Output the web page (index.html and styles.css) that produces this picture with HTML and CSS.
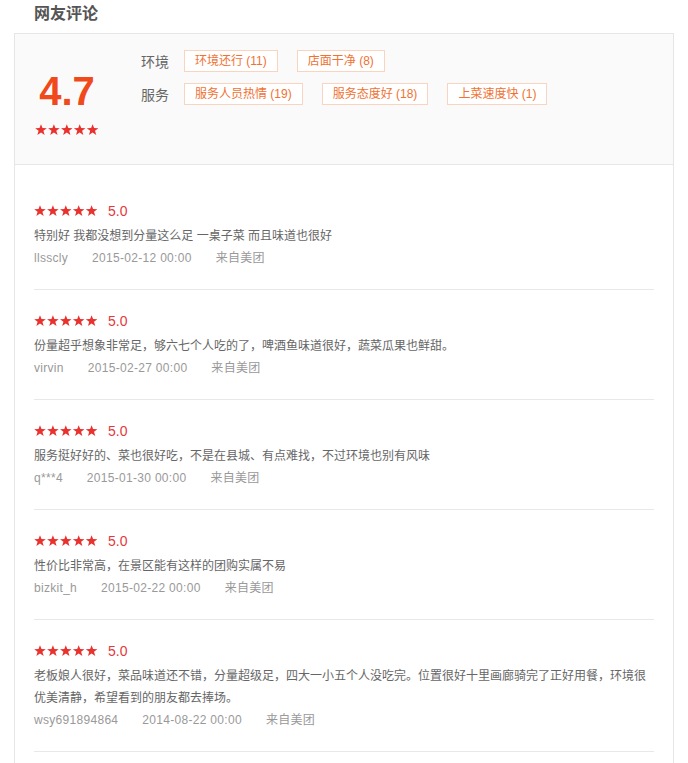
FILE: index.html
```html
<!DOCTYPE html>
<html lang="zh">
<head>
<meta charset="utf-8">
<title>网友评论</title>
<link rel="stylesheet" href="styles.css">
</head>
<body>
<svg class="defs" width="0" height="0" aria-hidden="true">
  <defs>
    <symbol id="star" viewBox="0 0 12 12">
      <polygon points="6,0.2 7.5,4.05 11.8,4.15 8.4,6.8 9.65,11.1 6,8.55 2.35,11.1 3.6,6.8 0.2,4.15 4.5,4.05"/>
    </symbol>
    <symbol id="stars5" viewBox="0 0 64 12">
      <use href="#star" x="0" y="0" width="12" height="12"/>
      <use href="#star" x="12.9" y="0" width="12" height="12"/>
      <use href="#star" x="25.8" y="0" width="12" height="12"/>
      <use href="#star" x="38.7" y="0" width="12" height="12"/>
      <use href="#star" x="51.6" y="0" width="12" height="12"/>
    </symbol>
  </defs>
</svg>

<div class="page">
  <h2 class="title">网友评论</h2>
  <div class="box">
    <div class="summary">
      <div class="score">
        <div class="score-num">4.7</div>
        <svg class="stars" width="64" height="12"><use href="#stars5"/></svg>
      </div>
      <div class="tags">
        <div class="tag-row">
          <span class="tag-label">环境</span>
          <span class="tag">环境还行 (11)</span>
          <span class="tag">店面干净 (8)</span>
        </div>
        <div class="tag-row">
          <span class="tag-label">服务</span>
          <span class="tag">服务人员热情 (19)</span>
          <span class="tag">服务态度好 (18)</span>
          <span class="tag">上菜速度快 (1)</span>
        </div>
      </div>
    </div>

    <ul class="reviews">
      <li class="review">
        <div class="rating"><svg class="stars" width="64" height="12"><use href="#stars5"/></svg><span class="rate">5.0</span></div>
        <p class="comment">特别好 我都没想到分量这么足 一桌子菜 而且味道也很好</p>
        <div class="meta"><span class="user">llsscly</span><span class="date">2015-02-12 00:00</span><span class="src">来自美团</span></div>
      </li>
      <li class="review">
        <div class="rating"><svg class="stars" width="64" height="12"><use href="#stars5"/></svg><span class="rate">5.0</span></div>
        <p class="comment">份量超乎想象非常足，够六七个人吃的了，啤酒鱼味道很好，蔬菜瓜果也鲜甜。</p>
        <div class="meta"><span class="user">virvin</span><span class="date">2015-02-27 00:00</span><span class="src">来自美团</span></div>
      </li>
      <li class="review">
        <div class="rating"><svg class="stars" width="64" height="12"><use href="#stars5"/></svg><span class="rate">5.0</span></div>
        <p class="comment">服务挺好好的、菜也很好吃，不是在县城、有点难找，不过环境也别有风味</p>
        <div class="meta"><span class="user">q***4</span><span class="date">2015-01-30 00:00</span><span class="src">来自美团</span></div>
      </li>
      <li class="review">
        <div class="rating"><svg class="stars" width="64" height="12"><use href="#stars5"/></svg><span class="rate">5.0</span></div>
        <p class="comment">性价比非常高，在景区能有这样的团购实属不易</p>
        <div class="meta"><span class="user">bizkit_h</span><span class="date">2015-02-22 00:00</span><span class="src">来自美团</span></div>
      </li>
      <li class="review">
        <div class="rating"><svg class="stars" width="64" height="12"><use href="#stars5"/></svg><span class="rate">5.0</span></div>
        <p class="comment">老板娘人很好，菜品味道还不错，分量超级足，四大一小五个人没吃完。位置很好十里画廊骑完了正好用餐，环境很优美清静，希望看到的朋友都去捧场。</p>
        <div class="meta"><span class="user">wsy691894864</span><span class="date">2014-08-22 00:00</span><span class="src">来自美团</span></div>
      </li>
    </ul>
  </div>
</div>
</body>
</html>
```

FILE: styles.css
```css
html, body {
  margin: 0;
  padding: 0;
  background: #fff;
}

body {
  font-family: "Liberation Sans", "Noto Sans CJK SC", sans-serif;
  color: #666;
}

.defs {
  position: absolute;
  width: 0;
  height: 0;
  overflow: hidden;
}

.page {
  margin: 0 14px;
}

.title {
  margin: 0;
  height: 33px;
  line-height: 28px;
  padding-left: 20px;
  font-size: 16px;
  font-weight: bold;
  color: #555;
}

.box {
  border: 1px solid #e6e6e6;
  border-bottom: none;
}

.summary {
  box-sizing: border-box;
  height: 131px;
  background: #fafafa;
  border-bottom: 1px solid #e6e6e6;
  padding: 16px 20px 0;
  display: flex;
  align-items: flex-start;
}

.score {
  width: 64px;
  margin-top: 19px;
  margin-right: 42px;
  display: flex;
  flex-direction: column;
  align-items: center;
}

.score-num {
  font-family: "Liberation Sans", Arial, sans-serif;
  font-size: 40px;
  font-weight: bold;
  line-height: 44px;
  color: #f04a1c;
}

.stars {
  display: block;
  fill: #e8322e;
}

.score .stars {
  margin-top: 11px;
}

.tags {
  display: flex;
  flex-direction: column;
  gap: 11px;
}

.tag-row {
  display: flex;
  align-items: center;
  height: 22px;
}

.tag-label {
  font-size: 14px;
  color: #666;
  margin-right: 15px;
}

.tag {
  box-sizing: border-box;
  height: 22px;
  line-height: 20px;
  padding: 0 10px;
  border: 1px solid #f9d4bf;
  color: #f07233;
  font-size: 12px;
  margin-right: 19px;
  background: #fff;
}

.reviews {
  list-style: none;
  margin: 0;
  padding: 15px 19px 40px;
}

.review {
  padding: 21px 0 20px;
  border-bottom: 1px solid #e8e8e8;
}

.rating {
  display: flex;
  align-items: center;
  height: 20px;
}

.rate {
  margin-left: 10px;
  font-size: 14px;
  color: #e5383b;
}

.comment {
  margin: 4px 0 0;
  font-size: 12px;
  line-height: 22px;
  color: #666;
}

.meta {
  font-size: 12px;
  line-height: 22px;
  color: #999;
  letter-spacing: 0.3px;
}

.meta span {
  margin-right: 24px;
}
```
